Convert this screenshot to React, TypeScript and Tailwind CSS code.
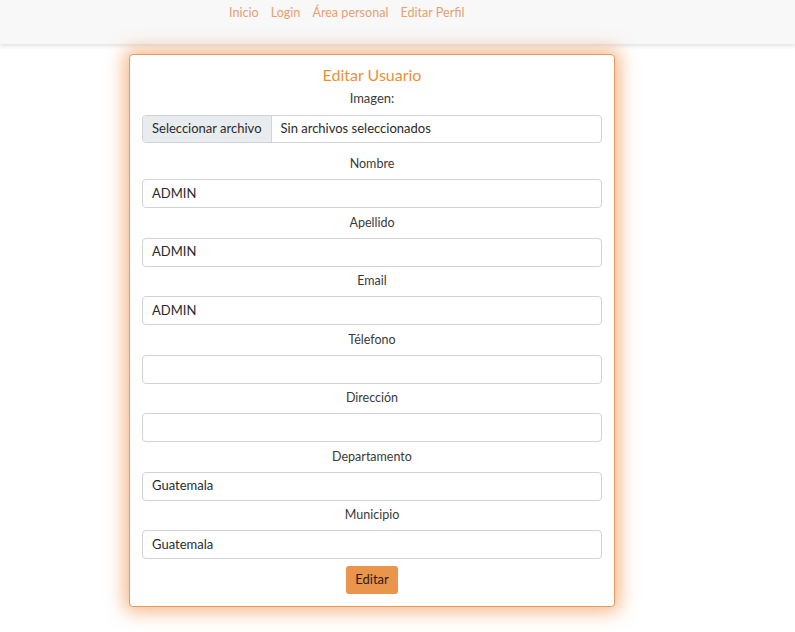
import React from "react";

const fields: { label: string; value: string }[] = [
  { label: "Nombre", value: "ADMIN" },
  { label: "Apellido", value: "ADMIN" },
  { label: "Email", value: "ADMIN" },
  { label: "Télefono", value: "" },
  { label: "Dirección", value: "" },
  { label: "Departamento", value: "Guatemala" },
  { label: "Municipio", value: "Guatemala" },
];

export default function App() {
  return (
    <div className="min-h-[632px] bg-white text-[13px] text-[#3a3a3a] font-['Lato','Open_Sans',sans-serif]">
      <nav className="h-[44px] bg-[#f8f8f8] shadow-[0_2px_4px_rgba(0,0,0,0.12)] flex">
        <div className="ml-[229px] flex gap-[12px] pt-[2px] h-[21px] leading-[21px] text-[12.6px] text-[#e8a072]">
          <span>Inicio</span>
          <span>Login</span>
          <span>Área personal</span>
          <span>Editar Perfil</span>
        </div>
      </nav>
      <div className="flex pt-[10px]">
        <div className="ml-[129px] w-[486px] rounded-[4px] border border-[#ec9a5a] bg-white shadow-[0_0_18px_5px_rgba(236,128,44,0.55)] px-[12px] pt-[8px] pb-[12px] flex flex-col">
          <div className="text-center text-[16px] leading-[24px] text-[#e8913a]">Editar Usuario</div>
          <div className="text-center leading-[21px] mt-[1px]">Imagen:</div>
          <div className="mt-[6px] h-[28px] flex border border-[#ced4da] rounded-[4px] overflow-hidden text-[#2a2a2a]">
            <div className="bg-[#e9ecef] border-r border-[#ced4da] px-[9px] flex items-center">Seleccionar archivo</div>
            <div className="px-[9px] flex items-center">Sin archivos seleccionados</div>
          </div>
          <div className="mt-[10px] flex flex-col">
            {fields.map((f, i) => (
              <div key={f.label} className={i === 0 ? "flex flex-col" : "flex flex-col mt-[3.5px]"}>
                <div className="text-center leading-[21px] text-[12.5px]">{f.label}</div>
                <div className="mt-[5px] h-[29px] border border-[#ced4da] rounded-[4px] px-[9px] flex items-center text-[#2a2a2a]">
                  {f.value}
                </div>
              </div>
            ))}
          </div>
          <div className="mt-[7px] flex justify-center">
            <div className="h-[28px] px-[9px] flex items-center rounded-[3px] bg-[#e9954b] text-[#2a2018]">Editar</div>
          </div>
        </div>
      </div>
    </div>
  );
}
